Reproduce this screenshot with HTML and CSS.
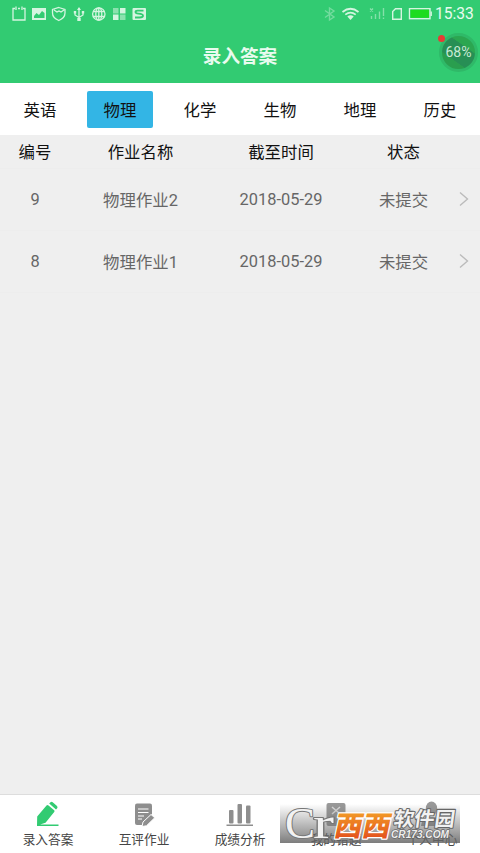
FILE: index.html
```html
<!DOCTYPE html>
<html lang="zh-CN">
<head>
<meta charset="utf-8">
<title>录入答案</title>
<link rel="stylesheet" href="styles.css">
</head>
<body>
<div class="app">
  <header class="top">
    <div class="status">
      <svg class="status-left" width="150" height="28" viewBox="0 0 150 28" fill="none" stroke="#d5f5e0" stroke-width="1.3">
        <path d="M15 8.500H13V20H25V8.500H23M16 6.500V10M22 6.500V10M18 8.500H20"/>
        <path fill="#d5f5e0" stroke="none" fill-rule="evenodd" d="M32 8H46V20H32ZM34 18H44.500V13L42 11L39 15L36.500 13L34 16Z"/>
        <path d="M58.800 7.500L65 9.500V13Q65 18 58.800 20.500Q52.500 18 52.500 13V9.500ZM54 10L57 12L59 11L61 12L64 10"/>
        <path d="M79 8V20M75 12V15L79 17.500L83 15V12"/><path fill="#d5f5e0" stroke="none" d="M77 10L79 7L81 10ZM73.800 11H76.200V13.500H73.800ZM81.800 11H84.200V13.500H81.800ZM77.300 18H80.700V21H77.300Z"/>
        <circle cx="98.800" cy="14" r="6.200"/><ellipse cx="98.800" cy="14" rx="3" ry="6.200"/><path d="M98.800 8V20M93 11.500H104.500M93 16.500H104.500"/>
        <g fill="#d5f5e0" stroke="none"><path opacity=".55" d="M113 8H118.500V13.500H113ZM120 14.500H125.500V20H120Z"/><path d="M120 8H125.500V13.500H120ZM113 14.500H118.500V20H113Z"/><rect x="132.500" y="8" width="13.500" height="12" rx="1"/></g>
        <path d="M143.500 10.700H137.500Q135.500 10.700 135.500 12Q135.500 13.500 138.500 13.700Q143 14 143 15.800Q143 17.500 139.500 17.500H135" stroke="#32cb72" stroke-width="1.800"/>
      </svg>
      <svg class="status-right" width="110" height="28" viewBox="322 0 110 28" fill="none" stroke="#d5f5e0" stroke-width="1.400">
        <path opacity=".4" d="M325 10.500L334 17L329.500 20V8L334 11L325 17.500"/>
        <path stroke-width="1.700" d="M342.500 12Q350.500 5.500 358.500 12M345.300 14.700Q350.500 10.500 355.700 14.700"/><path fill="#d5f5e0" stroke="none" d="M347.300 16.600Q350.500 14 353.700 16.600L350.500 20Z"/>
        <path opacity=".5" d="M371.500 16V19M375.500 14V19M379.500 11.500V19M383.500 8V16M383.500 17.500V19M370 8.500L373 11.500M373 8.500L370 11.500"/>
        <path d="M395.500 8.700H401.300V19.300H392.700V11.500Z"/>
        <rect x="409.500" y="8.700" width="20.500" height="10"/><path fill="#1edc1e" stroke="none" d="M410.500 9.700H429V17.700H410.500Z"/><path d="M431.200 11.500V16"/>
      </svg>
      <span class="clock">15:33</span>
    </div>
    <h1>录入答案</h1>
    <div class="float">68%</div><i class="dot"></i>
  </header>
  <nav class="tabs"><a>英语</a><a class="on">物理</a><a>化学</a><a>生物</a><a>地理</a><a>历史</a></nav>
  <main>
    <div class="row head"><span>编号</span><span>作业名称</span><span>截至时间</span><span>状态</span></div>
    <div class="row"><span class="num">9</span><span>物理作业2</span><span class="num">2018-05-29</span><span>未提交</span><svg width="12" height="16" viewBox="0 0 12 16"><path d="M2 1.500L9.500 8L2 14.500"/></svg></div>
    <div class="row"><span class="num">8</span><span>物理作业1</span><span class="num">2018-05-29</span><span>未提交</span><svg width="12" height="16" viewBox="0 0 12 16"><path d="M2 1.500L9.500 8L2 14.500"/></svg></div>
  </main>
  <footer class="nav">
    <a><svg width="28" height="28" viewBox="0 0 28 28" fill="#32cb72"><path d="M3.200 16.500L12.500 5.500Q13.500 4.700 14.500 5.500L20.200 10.200Q21 11 20.200 12L11.500 22.800L3 25.500ZM15.200 3.500L16.500 2.200Q17.500 1.300 18.700 2.200L23 5.900Q24 7 23.200 8.200L22 9.500ZM3 24.500H24.500V26H3Z"/></svg><span>录入答案</span></a>
    <a><svg width="28" height="28" viewBox="0 0 28 28" fill="#8e8e8e"><path d="M7 3.500H20Q22 3.500 22 5.500V14L12 25H7Q5 25 5 23V5.500Q5 3.500 7 3.500Z"/><path d="M8 9H18.500M8 12.500H18.500M8 16H14M8 19H12" stroke="#fff" stroke-width="1.100"/><path d="M12 26.500L13 22L21 14.500L24.700 17.800L16.500 25.800Z" stroke="#fff"/></svg><span>互评作业</span></a>
    <a><svg width="28" height="28" viewBox="0 0 28 28" fill="#8e8e8e"><rect x="3" y="10" width="4.500" height="13.500" rx="1"/><rect x="11.500" y="4" width="4.500" height="19.500" rx="1"/><rect x="20" y="5.500" width="4.500" height="18" rx="1"/><path d="M.5 24.500H27V26H.5Z"/></svg><span>成绩分析</span></a>
    <a><svg width="28" height="28" viewBox="0 0 28 28"><rect x="4.500" y="3" width="19" height="23" rx="2" fill="#999"/><path d="M10 7L18 14M18 7L10 14" stroke="#ddd" stroke-width="1.500"/></svg><span>我的错题</span></a>
    <a><svg width="28" height="28" viewBox="0 0 28 28" fill="#999"><ellipse cx="13.500" cy="8.500" rx="5.700" ry="7"/><path d="M3 26Q3 17 14 17Q25 17 25 26Z"/></svg><span>个人中心</span></a>
  </footer>
  <svg class="mark" width="180" height="39" viewBox="0 0 180 39">
    <defs>
      <linearGradient id="shade" x2="0" y2="1"><stop offset="0" stop-color="#666" stop-opacity="0"/><stop offset="1" stop-color="#666" stop-opacity=".85"/></linearGradient>
      <linearGradient id="fire" x2="0" y2="1"><stop offset="0" stop-color="#f8b52a"/><stop offset="1" stop-color="#e0441c"/></linearGradient>
    </defs>
    <rect width="180" height="39" fill="url(#shade)"/>
    <g class="outline"><text class="c" x="5" y="33.500" textLength="30" lengthAdjust="spacingAndGlyphs">C</text><text class="r" x="33" y="33.500" textLength="21" lengthAdjust="spacingAndGlyphs">r</text></g>
    <g transform="translate(53 31.500) skewX(-12)"><text class="west" textLength="56" lengthAdjust="spacingAndGlyphs">西西</text></g>
    <g transform="translate(113 22) skewX(-8)"><text class="soft" textLength="61" lengthAdjust="spacingAndGlyphs">软件园</text></g>
    <text class="site" x="111" y="34" textLength="58" lengthAdjust="spacingAndGlyphs">CR173.COM</text>
  </svg>
</div>
</body>
</html>
```
FILE: styles.css
```css
* { box-sizing: border-box; }
body { margin: 0; font-family: Roboto, "Noto Sans CJK SC", sans-serif; }
.app { position: relative; width: 480px; height: 853px; display: flex; flex-direction: column; background: #efefef; overflow: hidden; }
.top { position: relative; height: 83px; background: #32cb72; color: #e9fbef; flex: none; }
.status { height: 28px; display: flex; align-items: center; }
.status-left { flex: none; }
.status-right { flex: none; margin-left: 172px; }
.clock { margin-left: 3px; font-size: 15.6px; line-height: 28px; white-space: nowrap; }
h1 { margin: 0; height: 55px; padding-top: 1px; line-height: 56px; text-align: center; font-size: 18.6px; font-weight: 700; }
.float { position: absolute; left: 439px; top: 33px; width: 39px; height: 39px; border-radius: 50%; border: 3px solid #2fb968; background: linear-gradient(35deg, #2a9e4e 30%, #278f55 31%, #278f55 68%, #2ba650 69%); color: #c8ead4; font-size: 14px; line-height: 33px; text-align: center; }
.dot { position: absolute; left: 438px; top: 35px; width: 7px; height: 7px; border-radius: 50%; background: #e63c34; }
.tabs { height: 52px; flex: none; display: grid; grid-template-columns: repeat(6, 80px); align-items: center; justify-items: center; background: #fff; }
.tabs a { width: 66px; height: 37px; padding-top: 2px; border-radius: 2px; line-height: 35px; text-align: center; font-size: 16.4px; color: #111; }
.tabs .on { background: #33b5e5; }
main { flex: 1; }
.row { height: 62px; padding-bottom: 2px; display: grid; grid-template-columns: 70px 141px 140px 105px 24px; align-items: center; border-bottom: 1px solid #ededed; font-size: 16.4px; color: #666; text-align: center; }
.row .num { padding-top: 1px; }
.row svg { margin: 1px 0 0 2px; fill: none; stroke: #bbb; stroke-width: 1.4; }
.head { height: 34px; color: #111; }
.nav { height: 59px; flex: none; display: grid; grid-template-columns: repeat(5, 1fr); background: #fff; border-top: 1px solid #ddd; }
.nav a { display: flex; flex-direction: column; align-items: center; padding-top: 5px; font-size: 12.7px; line-height: 24px; color: #444; }
.mark { position: absolute; left: 280px; top: 804px; overflow: visible; }
.mark text { paint-order: stroke; stroke-linejoin: round; }
.outline text { font-family: "Liberation Serif", serif; fill: #f2f2f2; stroke: #777; stroke-width: 2px; }
.outline .c { font-size: 45px; }
.outline .r { font-size: 45px; }
.west { font: 900 28px "Noto Sans CJK SC", sans-serif; fill: url(#fire); stroke: #fff; stroke-width: 2.5px; }
.soft { font: 700 20px "Noto Sans CJK SC", sans-serif; fill: #f2f2f2; stroke: #666; stroke-width: 2px; }
.site { font: italic 700 11px "Liberation Sans", sans-serif; fill: #eee; stroke: #666; stroke-width: 1.5px; }
```
